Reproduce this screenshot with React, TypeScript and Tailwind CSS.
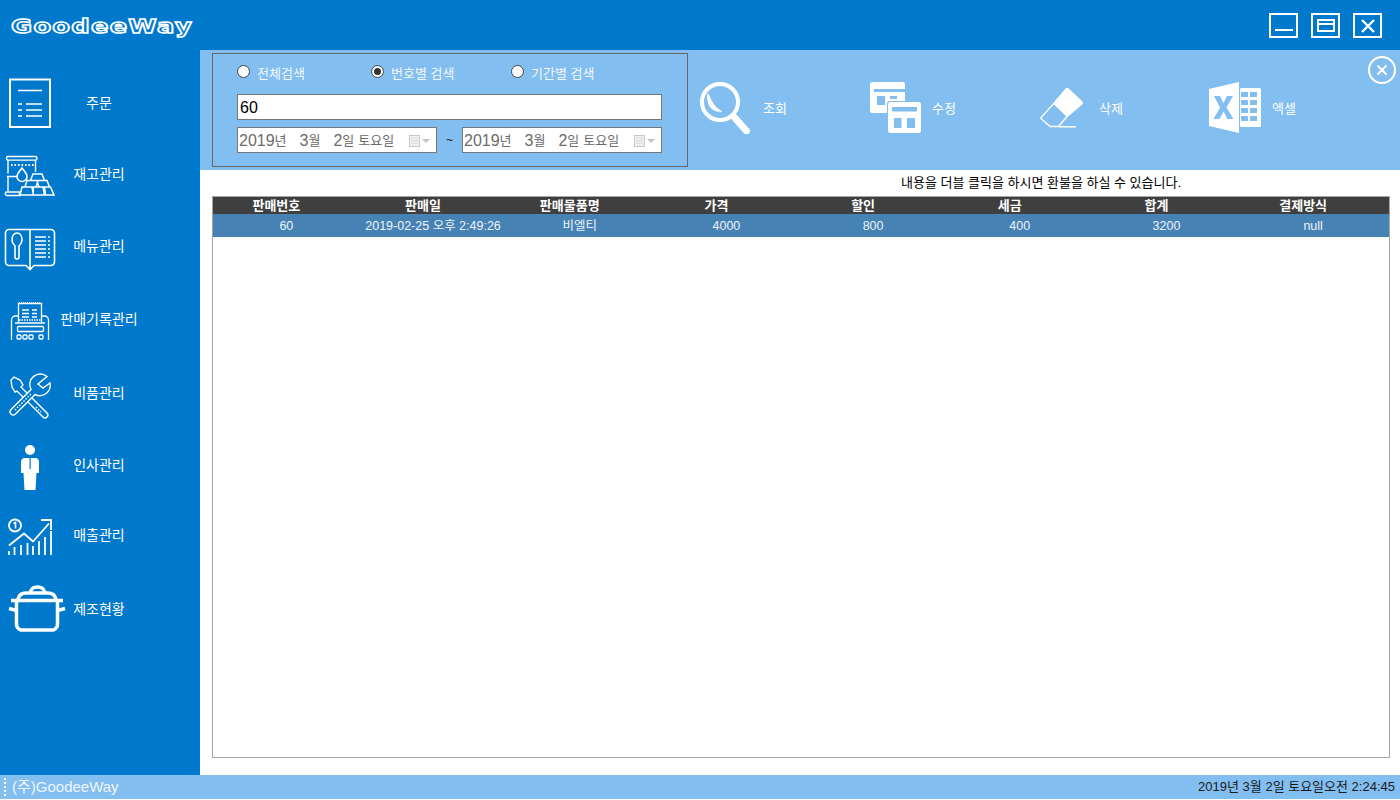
const font = "font-['Liberation_Sans','Noto_Sans_CJK_KR',sans-serif]";

const OrderIcon = () => (
  <svg viewBox="0 0 60 60" className="w-[60px] h-[60px] overflow-visible" fill="none" stroke="white" strokeWidth="1.6">
    <rect x="10" y="6.5" width="40" height="47.5" strokeWidth="2" />
    <path d="M18 17.5h24M18 31h4M26 31h16M18 37h4M26 37h16M18 43h4M26 43h16" />
  </svg>
);

const StockIcon = () => (
  <svg viewBox="0 0 60 60" className="w-[60px] h-[60px] overflow-visible" fill="none" stroke="white" strokeWidth="1.4">
    <rect x="6.5" y="11.5" width="30.5" height="3.6" rx="1.5" />
    <path d="M8 15v13.5M35.5 15v12M7 31.5h11M8 32v14M7 47h14a1 1 0 0 0 0 3.5H7a1.7 1.7 0 0 1 0-3.5z" />
    <path d="M11 20h1.6M14.5 20h1.6M18 20h1.6M21.5 20h1.6M25 20h1.6M28.5 20h1.6M32 20h1.6" strokeWidth="2" />
    <path d="M22 23c3 4 5 6 5 8.5a5 5 0 0 1-10 0c0-2.5 2-4.500 5-8.5z" strokeWidth="1.6" />
    <path d="M33 29h9l2.5 6.500H30.500zM27 35.500h10l2 6.500H25zM38 35.500h9l2.500 6.500H36zM22 42h10l1.500 8H20zM33.500 42h9.500l1.500 8H33zM44.500 42h6l3.500 8h-8.500z" strokeWidth="1.5" />
  </svg>
);

const MenuIcon = () => (
  <svg viewBox="0 0 60 60" className="w-[60px] h-[60px] overflow-visible" fill="none" stroke="white" strokeWidth="1.6">
    <path d="M30 12.500h-21a3.500 3.500 0 0 0-3.500 3.500v29a3.500 3.500 0 0 0 3.500 3.500h17l4 4 4-4h17a3.500 3.500 0 0 0 3.500-3.500v-29a3.500 3.500 0 0 0-3.500-3.500h-21zM30 12.500v40" />
    <path d="M17 16c3 0 5 3 5 7 0 3-2 5-3 6v11a2 2 0 0 1-4 0v-11c-1-1-3-3-3-6 0-4 2-7 5-7z" />
    <path d="M35 20h11M35 24h11M35 28h11M35 32h11M35 36h11M35 40h11M48 20h2M48 24h2M48 28h2M48 32h2M48 36h2M48 40h2" />
  </svg>
);

const PrinterIcon = () => (
  <svg viewBox="0 0 60 60" className="w-[60px] h-[60px] overflow-visible" fill="none" stroke="white" strokeWidth="1.3">
    <path d="M18.500 32V13.500h23V32" />
    <path d="M19 13h22" strokeWidth="1.500" strokeDasharray="1 1" />
    <path d="M22 20h7M22 23.500h7M32 20h5M32 23.500h5M32 27h5M22 27h7" strokeWidth="1.500" />
    <path d="M19 30h22" strokeDasharray="1.500 1" />
    <path d="M11.500 50V30a4 4 0 0 1 4-4h3M48.500 50V30a4 4 0 0 0-4-4h-3M15 33h30" />
    <rect x="17.500" y="36.500" width="26" height="5" rx="1" />
    <rect x="17" y="45" width="4" height="4" rx="1" />
    <rect x="23" y="45" width="4" height="4" rx="1" />
    <rect x="29" y="45" width="4" height="4" rx="1" />
    <rect x="39" y="45" width="4" height="4" rx="1" />
  </svg>
);

const ToolsIcon = () => (
  <svg viewBox="0 0 60 60" className="w-[60px] h-[60px] overflow-visible" fill="none" stroke="white" strokeWidth="1.4">
    <path d="M11 17l3-3 6 3 3 5-2 2 26 26a2.800 2.800 0 0 1-4 4L17 28l-2 1-3-5z" />
    <path d="M47 13.500A10.500 10.500 0 0 0 31 26.500L11 46.500a3 3 0 0 0 4.500 4.500L35 31.500A10.500 10.500 0 0 0 50 20L43 25l-5-4z" fill="#0078CC" />
    <path d="M15 47l17-17M36 44l5 5" strokeDasharray="1.500 1.500" />
  </svg>
);

const PersonIcon = () => (
  <svg viewBox="0 0 60 60" className="w-[60px] h-[60px] overflow-visible" fill="white">
    <circle cx="30" cy="14" r="5" />
    <path d="M24 22h12c2 .5 3 2 3 4v11h-2.500l-1 17h-11l-1-17H21V26c0-2 1-3.500 3-4z" />
    <path d="M29.500 22h1.200v11h-1.200z" fill="#0078CC" />
  </svg>
);

const ChartIcon = () => (
  <svg viewBox="0 0 60 60" className="w-[60px] h-[60px] overflow-visible" fill="none" stroke="white">
    <circle cx="15" cy="19.500" r="6" strokeWidth="1.800" />
    <path d="M13.500 17.500l2-1v6" strokeWidth="1.600" />
    <path d="M9 39.500l15-12 9 8 16-18" strokeWidth="1.800" />
    <path d="M41 14h10v10" strokeWidth="1.800" />
    <path d="M9 49v-4M14.500 49v-8M21 49v-10M27.500 49v-12M33 49v-9M39 49v-14M45 49v-18M51 49v-24" strokeWidth="1.800" />
  </svg>
);

const PotIcon = () => (
  <svg viewBox="0 0 60 60" className="w-[60px] h-[60px] overflow-visible" fill="none" stroke="white" strokeWidth="3.5">
    <path d="M16.500 22v22a7 7 0 0 0 4 7h33a7 7 0 0 0 4-7V22" />
    <path d="M11 21.500h52M18 20c1-4 3-6 8-6h22c5 0 7 2 8 6" />
    <path d="M30.500 13c1-4 3-5 7-5s6 1 7 5" />
    <path d="M9 29.500l7.500 2M65 29.500l-7.500 2" />
  </svg>
);

const SearchIcon = () => (
  <svg viewBox="0 0 52 52" className="w-[52px] h-[52px]" fill="none" stroke="white">
    <ellipse cx="20" cy="20" rx="18" ry="18" strokeWidth="4" />
    <path d="M8 12c-1 11 4 17 12 17-5-3-9-8-12-17z" fill="white" strokeWidth="1.500" />
    <path d="M35 36l11.500 13" strokeWidth="7" strokeLinecap="round" />
  </svg>
);

const EditIcon = () => (
  <svg viewBox="0 0 52 52" className="w-[52px] h-[52px]">
    <rect x="0" y="0" width="35" height="31" rx="2.500" fill="white" />
    <path d="M4 7h31v3H4z" fill="#83BEF0" />
    <path d="M7 14h8v9H7zM20 14h7v3h-7z" fill="#83BEF0" />
    <rect x="17" y="19" width="35" height="33" rx="3" fill="#83BEF0" />
    <rect x="18" y="20" width="33" height="31" rx="2.500" fill="white" />
    <path d="M22 25h25v4.500H22zM24 36h7.500v10H24zM37 36h8v10h-8z" fill="#83BEF0" />
  </svg>
);

const EraserIcon = () => (
  <svg viewBox="0 0 52 52" className="w-[48px] h-[52px]" fill="none" stroke="white" strokeWidth="1.500">
    <path d="M15 21L28 5.500a1.500 1.500 0 0 1 2.500 0L45 19a2 2 0 0 1 0 3L29.500 35z" fill="white" />
    <path d="M15 21L.7 37l10.300 9h9L29.500 35M20 46.300h19" />
  </svg>
);

const ExcelIcon = () => (
  <svg viewBox="0 0 52 52" className="w-[52px] h-[52px]">
    <path d="M0 7L30 0v51L0 44z" fill="white" />
    <path d="M5 14h6l3.500 7L18 14h6l-6.500 11.500L24.500 37h-6l-4-7.500L10.500 37h-6l6.500-11.500z" fill="#83BEF0" />
    <rect x="31" y="6" width="21" height="39" rx="1.500" fill="white" />
    <path d="M32 10h7v5h-7zM41 10h7v5h-7zM32 18h7v5h-7zM41 18h7v5h-7zM32 26h7v5h-7zM41 26h7v5h-7zM32 34h7v5h-7zM41 34h7v5h-7z" fill="#83BEF0" />
  </svg>
);

const menus = [
  { label: "주문", icon: OrderIcon, h: "h-[72px]" },
  { label: "재고관리", icon: StockIcon, h: "h-[71px]" },
  { label: "메뉴관리", icon: MenuIcon, h: "h-[73px]" },
  { label: "판매기록관리", icon: PrinterIcon, h: "h-[73px]" },
  { label: "비품관리", icon: ToolsIcon, h: "h-[74px]" },
  { label: "인사관리", icon: PersonIcon, h: "h-[71px]" },
  { label: "매출관리", icon: ChartIcon, h: "h-[69px]" },
  { label: "제조현황", icon: PotIcon, h: "h-[78px]" },
];

const actions = [
  { label: "조회", icon: SearchIcon, w: "w-[170px]", gap: "ml-[11px]" },
  { label: "수정", icon: EditIcon, w: "w-[170px]", gap: "ml-[10px]" },
  { label: "삭제", icon: EraserIcon, w: "w-[169px]", gap: "ml-[11px]" },
  { label: "엑셀", icon: ExcelIcon, w: "w-[170px]", gap: "ml-[11px]" },
];

const columns = ["판매번호", "판매일", "판매물품명", "가격", "할인", "세금", "합계", "결제방식"];
const row = ["60", "2019-02-25 오후 2:49:26", "비엘티", "4000", "800", "400", "3200", "null"];

function Radio({ label, checked }: { label: string; checked?: boolean }) {
  return (
    <label className="flex items-start gap-[7px]">
      <span className="w-[13px] h-[13px] rounded-full bg-white border border-[#444] flex items-center justify-center">
        {checked && <span className="w-[7px] h-[7px] rounded-full bg-[#333]" />}
      </span>
      <span className="text-[13px] text-[#f2f8fd] leading-none mt-[2px]">{label}</span>
    </label>
  );
}

function DateBox() {
  return (
    <div className="w-[200px] h-[26px] bg-white border border-[#777] flex items-center pl-[1px] pt-[2px] text-[#6b6b6b] whitespace-nowrap">
      <span className="text-[16px]">2019</span>
      <span className="text-[13px]">년</span>
      <span className="text-[16px] ml-[13px]">3</span>
      <span className="text-[13px]">월</span>
      <span className="text-[16px] ml-[13px]">2</span>
      <span className="text-[13px]">일</span>
      <span className="text-[13px] ml-[4px]">토요일</span>
      <svg viewBox="0 0 22 12" className="w-[22px] h-[12px] ml-auto mr-[5px]">
        <rect x="0.500" y="0.500" width="10" height="11" fill="#f1f1f1" stroke="#c8c8c8" />
        <path d="M2 3h7M2 5.500h7M2 8h7" stroke="#d8d8d8" />
        <path d="M13 4h8l-4 4z" fill="#c4c4c4" />
      </svg>
    </div>
  );
}

export default function App() {
  return (
    <div className={`w-[1400px] h-[800px] bg-white flex flex-col overflow-hidden ${font}`}>
      <header className="h-[50px] shrink-0 bg-[#0078CC] flex items-center justify-between pl-[11px] pr-[18px]">
        <span className="inline-block origin-left scale-x-[1.285] font-['DejaVu_Sans',sans-serif] font-bold text-[20px] tracking-[1px] text-[#0078CC] [-webkit-text-stroke:1.500px_white] mb-[-1px]">
          GoodeeWay
        </span>
        <div className="flex gap-[13px] mt-[1px]">
          <button className="w-[29px] h-[25px] border-[2.500px] border-white flex items-end justify-center pb-[5px]">
            <span className="w-[18px] h-[2px] bg-white" />
          </button>
          <button className="w-[29px] h-[25px] border-[2.500px] border-white flex items-center justify-center">
            <span className="w-[18px] h-[13px] border-2 border-white flex flex-col pt-[2px]">
              <span className="h-[2px] bg-white" />
            </span>
          </button>
          <button className="w-[29px] h-[25px] border-[2.500px] border-white flex items-center justify-center">
            <svg viewBox="0 0 14 14" className="w-[14px] h-[14px]" stroke="white" strokeWidth="2.400">
              <path d="M1 1l12 12M13 1L1 13" />
            </svg>
          </button>
        </div>
      </header>

      <div className="h-[725px] shrink-0 flex">
        <aside className="w-[200px] shrink-0 bg-[#0078CC] pt-[17px]">
          {menus.map((m) => (
            <div key={m.label} className={`${m.h} grid grid-cols-[60px_78px] items-center`}>
              <m.icon />
              <span className="text-[14px] text-white text-center whitespace-nowrap">{m.label}</span>
            </div>
          ))}
        </aside>

        <main className="flex-1 flex flex-col">
          <section className="relative h-[120px] shrink-0 bg-[#83BEF0] flex pl-[12px] pt-[3px]">
            <div className="w-[476px] h-[114px] shrink-0 border border-[#666] pl-[24px] pt-[11px]">
              <div className="grid grid-cols-[134px_140px_auto] h-[14px]">
                <Radio label="전체검색" />
                <Radio label="번호별 검색" checked />
                <Radio label="기간별 검색" />
              </div>
              <div className="w-[425px] h-[26px] mt-[15px] pt-[1px] bg-white border border-[#777] flex items-center pl-[2px] text-[16px] text-black">
                60
              </div>
              <div className="flex items-center mt-[7px]">
                <DateBox />
                <span className="w-[25px] text-center text-[12px] text-[#222]">~</span>
                <DateBox />
              </div>
            </div>

            <div className="flex ml-[12px] mt-[29px] h-[52px]">
              {actions.map((a) => (
                <button key={a.label} className={`${a.w} flex items-center`}>
                  <a.icon />
                  <span className={`${a.gap} text-[13px] text-white pt-[1px]`}>{a.label}</span>
                </button>
              ))}
            </div>

            <button className="absolute left-[1168px] top-[6px] w-[28px] h-[28px] rounded-full border-2 border-white flex items-center justify-center">
              <svg viewBox="0 0 12 12" className="w-[12px] h-[12px]" stroke="white" strokeWidth="2">
                <path d="M1.500 1.500l9 9M10.500 1.500l-9 9" />
              </svg>
            </button>
          </section>

          <p className="h-[26px] shrink-0 pl-[701px] pt-[5px] text-[13px] leading-[16px] text-black whitespace-nowrap">
            내용을 더블 클릭을 하시면 환불을 하실 수 있습니다.
          </p>

          <div className="ml-[12px] w-[1178px] h-[562px] border border-[#a5a5a5]">
            <div className="grid grid-cols-[repeat(8,146.700px)] h-[17px] bg-[#3f3f3f] text-white text-[13px] font-bold leading-[18px] text-center">
              {columns.map((c) => (
                <span key={c} className="pr-[20px]">
                  {c}
                </span>
              ))}
            </div>
            <div className="grid grid-cols-[repeat(8,146.700px)] h-[23px] bg-[#4682B4] text-[#eef4fa] text-[12.500px] leading-[25px] text-center">
              {row.map((c) => (
                <span key={c}>{c}</span>
              ))}
            </div>
          </div>
        </main>
      </div>

      <footer className="h-[24px] shrink-0 bg-[#83BEF0] flex items-center justify-between pl-[4px] pr-[5px]">
        <div className="flex items-center">
          <span className="h-[18px] border-l-2 border-dotted border-white" />
          <span className="ml-[6px] text-[15px] text-[#eef6fd]">(주)GoodeeWay</span>
        </div>
        <span className="text-[13px] text-[#1a1a1a]">2019년 3월 2일 토요일오전 2:24:45</span>
      </footer>
    </div>
  );
}
